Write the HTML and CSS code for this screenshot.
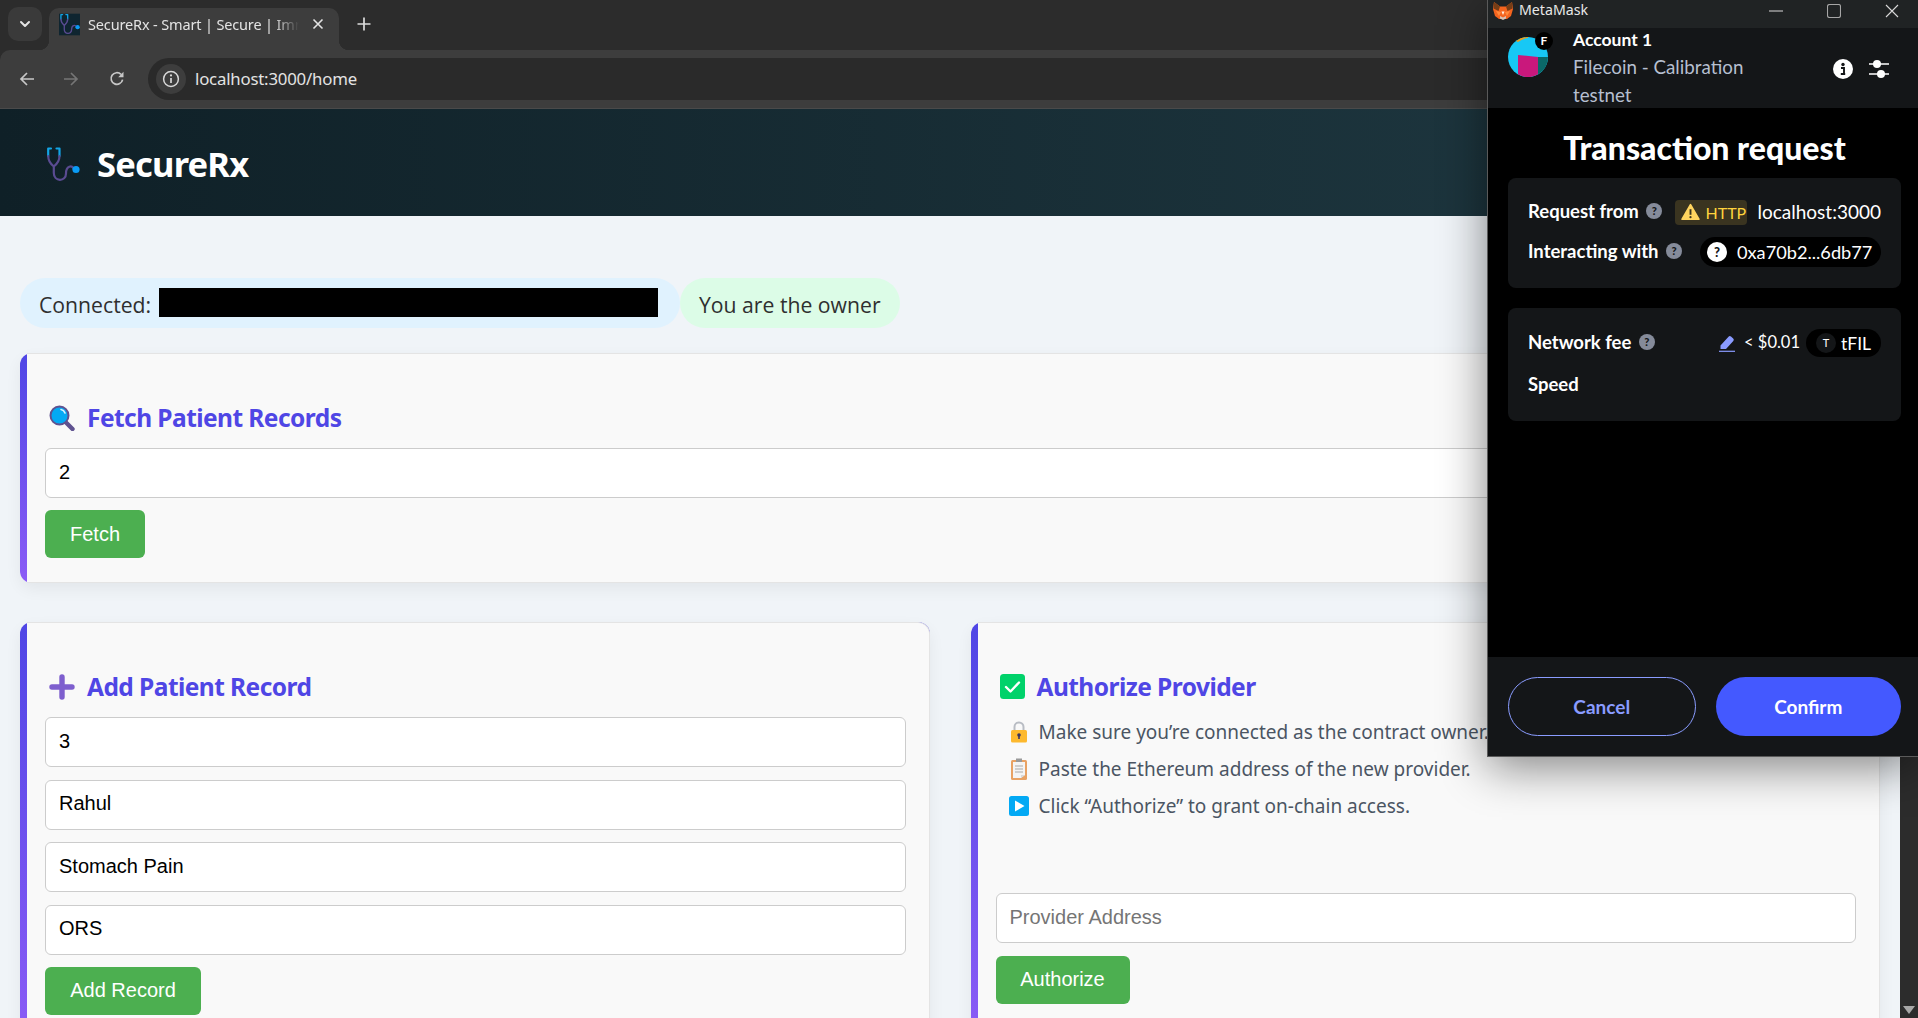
FILE: index.html
```html
<!DOCTYPE html>
<html lang="en">
<head>
<meta charset="utf-8">
<title>SecureRx - Smart | Secure | Immutable</title>
<link rel="stylesheet" href="styles.css">
</head>
<body>
<svg class="defs" width="0" height="0" aria-hidden="true">
  <defs>
    <g id="steth" fill="none" stroke-linecap="round" stroke-linejoin="round">
      <path d="M6 1.500H3.200V9M11.500 1.500H14.500V9" stroke="#12a5e6" stroke-width="2.200"/>
      <path d="M3.200 9C3.200 15 8.800 19.500 8.800 19.500S14.500 15 14.500 9M8.800 19.500V26C8.800 35 21 35 21 26.500C21 18.500 27 18 29 22" stroke="#5a4b92" stroke-width="2.200"/>
      <circle cx="31" cy="22.500" r="3.600" fill="#0a9bf5"/>
    </g>
  </defs>
</svg>

<div class="chrome">
  <div class="tabstrip">
    <button class="tab-search"><svg width="14" height="14" viewBox="0 0 14 14"><path d="M3 5l4 4 4-4" fill="none" stroke="#e3e3e3" stroke-width="2" stroke-linecap="round" stroke-linejoin="round"/></svg></button>
    <div class="tab">
      <svg class="favicon" width="21" height="25" viewBox="0 0 35 36"><rect width="35" height="36" fill="#0f2530"/><use href="#steth"/></svg>
      <span class="tab-title">SecureRx - Smart | Secure | Immutable</span>
      <svg class="tab-close" width="12" height="12" viewBox="0 0 12 12"><path d="M1.500 1.500l9 9M10.500 1.500l-9 9" stroke="#e3e3e3" stroke-width="1.600"/></svg>
    </div>
    <svg class="new-tab" width="14" height="14" viewBox="0 0 14 14"><path d="M7 0.500v13M0.500 7h13" stroke="#dcdcdc" stroke-width="1.700"/></svg>
  </div>
  <div class="toolbar">
    <svg class="nav-icon" width="16" height="16" viewBox="0 0 16 16"><path d="M15 8H2M8 2L2 8l6 6" fill="none" stroke="#c7c7c7" stroke-width="1.700"/></svg>
    <svg class="nav-icon" width="16" height="16" viewBox="0 0 16 16"><path d="M1 8h13M8 2l6 6-6 6" fill="none" stroke="#757575" stroke-width="1.700"/></svg>
    <svg class="nav-icon" width="16" height="16" viewBox="0 0 16 16"><path d="M13.600 8.600A5.800 5.800 0 1 1 12 3.400" fill="none" stroke="#c7c7c7" stroke-width="1.700"/><path d="M14.500 0.800V6.200H9.200z" fill="#c7c7c7"/></svg>
    <div class="omnibox">
      <span class="info-chip"><svg width="18" height="18" viewBox="0 0 18 18"><circle cx="9" cy="9" r="7.400" fill="none" stroke="#d8d8d8" stroke-width="1.500"/><path d="M9 8v5" stroke="#d8d8d8" stroke-width="1.700"/><circle cx="9" cy="5.400" r="1.100" fill="#d8d8d8"/></svg></span>
      <span class="url">localhost:3000/home</span>
    </div>
  </div>
</div>

<div class="viewport">
  <div class="page">
    <header class="app-header">
      <svg class="logo" width="35" height="36" viewBox="0 0 35 36"><use href="#steth"/></svg>
      <span class="brand">SecureRx</span>
    </header>
    <main class="content">
      <div class="status-row">
        <div class="pill pill-blue"><span class="pill-text">Connected: </span><span class="redacted"></span></div>
        <div class="pill pill-green"><span class="pill-text">You are the owner</span></div>
      </div>

      <section class="card card-fetch">
        <div class="card-body">
          <h2 class="card-title">
            <svg class="title-icon" width="26" height="26" viewBox="0 0 26 26"><path d="M16.500 17l7 7" stroke="#5f5290" stroke-width="4.400" stroke-linecap="round"/><circle cx="10.500" cy="10.500" r="9" fill="#03a9f4" stroke="#5f5290" stroke-width="2"/><path d="M12 4.500a5.500 5.500 0 0 1 4 3.500" stroke="#d5f1ff" stroke-width="1.600" fill="none" stroke-linecap="round"/></svg>
            Fetch Patient Records
          </h2>
          <input class="field" type="text" value="2">
          <button class="btn btn-fetch">Fetch</button>
        </div>
      </section>

      <div class="two-col">
        <section class="card">
          <div class="card-body">
            <h2 class="card-title">
              <svg class="title-icon" width="26" height="26" viewBox="0 0 26 26"><path d="M13 3v20M3 13h20" stroke="#7e5fce" stroke-width="5.400" stroke-linecap="round"/></svg>
              Add Patient Record
            </h2>
            <input class="field" type="text" value="3">
            <input class="field" type="text" value="Rahul">
            <input class="field" type="text" value="Stomach Pain">
            <input class="field" type="text" value="ORS">
            <button class="btn btn-add">Add Record</button>
          </div>
        </section>
        <section class="card">
          <div class="card-body">
            <h2 class="card-title">
              <svg class="title-icon" width="25" height="25" viewBox="0 0 25 25"><rect width="25" height="25" rx="3.500" fill="#00d26a"/><path d="M6 13l4.500 4.500L19 8.500" fill="none" stroke="#fff" stroke-width="2.400" stroke-linecap="round" stroke-linejoin="round"/></svg>
              Authorize Provider
            </h2>
            <ul class="steps">
              <li><svg class="step-icon" width="20" height="22" viewBox="0 0 20 22"><path d="M5.500 10V6a4.500 4.500 0 0 1 9 0v4" fill="none" stroke="#b9bdc4" stroke-width="2"/><rect x="2" y="9" width="16" height="12.500" rx="1.500" fill="#fdb92e"/><circle cx="10" cy="14" r="1.800" fill="#3a3560"/><path d="M10 14v4" stroke="#3a3560" stroke-width="1.600"/></svg>Make sure you’re connected as the contract owner.</li>
              <li><svg class="step-icon" width="20" height="22" viewBox="0 0 20 22"><rect x="2" y="2" width="16" height="20" rx="1.500" fill="#e8a264"/><path d="M4 4h12v13l-4 3H4z" fill="#f4f4f4"/><path d="M12 20l4-3h-4z" fill="#d9d9d9"/><rect x="7" y="0.500" width="6" height="3.500" fill="#9a9a9a"/><path d="M6 8h8M6 11h8M6 14h8" stroke="#a8a8a8" stroke-width="1.100"/></svg>Paste the Ethereum address of the new provider.</li>
              <li><svg class="step-icon" width="20" height="22" viewBox="0 0 20 22"><rect y="1" width="20" height="20" rx="2.500" fill="#03a9f4"/><path d="M6 5.500l9.500 5.500-9.500 5.500z" fill="#fff"/></svg>Click “Authorize” to grant on-chain access.</li>
            </ul>
            <input class="field" type="text" placeholder="Provider Address">
            <button class="btn btn-auth">Authorize</button>
          </div>
        </section>
      </div>
    </main>
  </div>
  <div class="scrollbar">
    <svg width="14" height="10" viewBox="0 0 14 10"><path d="M1 1h12L7 9z" fill="#a8a8a8"/></svg>
  </div>
</div>

<aside class="mm-window">
  <div class="mm-titlebar">
    <svg class="mm-fox" width="20" height="18" viewBox="0 0 20 18">
      <path d="M1 0l6 4.500h6L19 0l1 7-2 7-4 3H6l-4-3-2-7z" fill="#f4641e"/>
      <path d="M1 0l6 4.500L5.500 9 .5 6.500zM19 0l-6 4.500L14.500 9l5-2.500z" fill="#763d16"/>
      <path d="M3 9l5 1-2 4zM17 9l-5 1 2 4z" fill="#ff8a3c"/>
      <path d="M7 14l3 1.500 3-1.500v2.500l-3 1.500-3-1.500z" fill="#d7c1b3"/>
      <path d="M8.500 9.500h3L10 13z" fill="#fff0e0"/>
    </svg>
    <span class="mm-name">MetaMask</span>
    <div class="win-controls">
      <svg width="14" height="14" viewBox="0 0 14 14"><path d="M0 7h14" stroke="#d9d9d9"/></svg>
      <svg width="14" height="14" viewBox="0 0 14 14"><rect x="0.500" y="0.500" width="13" height="13" rx="2" fill="none" stroke="#a6a6a6" stroke-width="1.100"/></svg>
      <svg width="14" height="14" viewBox="0 0 14 14"><path d="M1 1l12 12M13 1L1 13" stroke="#d9d9d9" stroke-width="1.100"/></svg>
    </div>
  </div>
  <div class="mm-account">
    <div class="mm-avatar">
      <svg width="40" height="40" viewBox="0 0 40 40">
        <circle cx="20" cy="20" r="20" fill="#17c8f5"/>
        <path d="M30 20h10a20 20 0 0 1-10 17.300z" fill="#0b6868"/>
        <path d="M10 18l20 2v17.300a20 20 0 0 1-20 0z" fill="#c9187c"/>
        <path d="M8 4a20 20 0 0 1 12-4v1a20 20 0 0 0-10 4z" fill="#f39c12"/>
      </svg>
      <span class="mm-badge">F</span>
    </div>
    <div class="mm-acct-text">
      <div class="mm-acct-name">Account 1</div>
      <div class="mm-acct-net">Filecoin - Calibration testnet</div>
    </div>
    <svg class="mm-info" width="20" height="20" viewBox="0 0 20 20"><circle cx="10" cy="10" r="10" fill="#fff"/><circle cx="10" cy="5.500" r="1.700" fill="#141618"/><path d="M8 9h3v6h1.200M7.800 15h4.400" stroke="#141618" stroke-width="1.900" fill="none"/></svg>
    <svg class="mm-sliders" width="22" height="20" viewBox="0 0 22 20"><path d="M1 5h20M1 15h20" stroke="#fff" stroke-width="1.400"/><circle cx="9" cy="5" r="4" fill="#fff"/><circle cx="13" cy="15" r="4" fill="#fff"/></svg>
  </div>
  <div class="mm-body">
    <h1 class="mm-title">Transaction request</h1>
    <div class="mm-section mm-sec-request">
      <div class="mm-row">
        <span class="mm-label">Request from <span class="q">?</span></span>
        <span class="mm-right">
          <span class="http"><svg width="19" height="18" viewBox="0 0 17 16"><path d="M8.500 1.500L16 14.500H1z" fill="#ffd45f" stroke="#ffd45f" stroke-width="1.500" stroke-linejoin="round"/><path d="M8.500 5.500v5" stroke="#3a3420" stroke-width="1.700"/><circle cx="8.500" cy="12.600" r="1" fill="#3a3420"/></svg>HTTP</span>
          <span class="mm-val">localhost:3000</span>
        </span>
      </div>
      <div class="mm-row">
        <span class="mm-label">Interacting with <span class="q">?</span></span>
        <span class="addr"><span class="addr-dot">?</span>0xa70b2...6db77</span>
      </div>
    </div>
    <div class="mm-section mm-sec-fee">
      <div class="mm-row mm-row-fee">
        <span class="mm-label">Network fee <span class="q">?</span></span>
        <span class="mm-right mm-fee">
          <svg width="16" height="17" viewBox="0 0 16 17"><path d="M1.500 10.500L9.500 1.800a1.800 1.800 0 0 1 2.500-.2l2.200 1.900a1.800 1.800 0 0 1 .1 2.500L7 14H1.500z" fill="#8a9bff"/><path d="M0 16.300h16" stroke="#8a9bff" stroke-width="1.200"/></svg>
          <span class="mm-val fee-val">&lt; $0.01</span>
          <span class="token"><span class="token-dot">T</span>tFIL</span>
        </span>
      </div>
      <div class="mm-row mm-row-fee">
        <span class="mm-label">Speed</span>
      </div>
    </div>
  </div>
  <div class="mm-footer">
    <button class="mm-btn mm-cancel">Cancel</button>
    <button class="mm-btn mm-confirm">Confirm</button>
  </div>
</aside>
</body>
</html>
```

FILE: styles.css
```css
* { box-sizing: border-box; }
html, body { margin: 0; height: 100%; }
body {
  width: 1918px;
  height: 1018px;
  overflow: hidden;
  display: flex;
  flex-direction: column;
  background: #f0f4f8;
  font-family: "Open Sans", "Noto Sans", sans-serif;
  position: relative;
}
.defs { position: absolute; }

/* Browser chrome */
.chrome { flex: none; height: 109px; background: #2c2c2c; }
.tabstrip { height: 50px; display: flex; align-items: flex-end; padding-left: 8px; }
.tab-search {
  width: 34px; height: 34px; margin-bottom: 9px; border: 0; border-radius: 10px;
  background: #3a3a3a; display: flex; align-items: center; justify-content: center; padding: 0;
}
.tab {
  position: relative; width: 290px; height: 42px; margin-left: 7px;
  background: #3d3d3d; border-radius: 10px 10px 0 0;
  display: flex; align-items: center; padding: 0 0 10px 10px;
}
.tab::before, .tab::after {
  content: ""; position: absolute; bottom: 0; width: 10px; height: 10px;
}
.tab::before { left: -10px; background: radial-gradient(circle at 0 0, transparent 10px, #3d3d3d 10.5px); }
.tab::after { right: -10px; background: radial-gradient(circle at 100% 0, transparent 10px, #3d3d3d 10.5px); }
.favicon { flex: none; }
.tab-title {
  width: 211px; margin-left: 8px; white-space: nowrap; overflow: hidden;
  color: #e3e3e3; font-size: 14.5px; font-family: "Noto Sans", sans-serif; letter-spacing: -0.15px;
  -webkit-mask-image: linear-gradient(90deg, #000 88%, transparent 100%);
  mask-image: linear-gradient(90deg, #000 88%, transparent 100%);
}
.tab-close { margin-left: 13px; flex: none; }
.new-tab { margin: 0 0 19px 18px; }
.toolbar {
  height: 59px; background: #3d3d3d; border-top-left-radius: 10px;
  border-bottom: 1px solid #4a4a4a;
  display: flex; align-items: center; padding: 0 0 1px 19px;
}
.nav-icon { margin-right: 28px; flex: none; }
.nav-icon:nth-of-type(2) { margin-right: 30px; }
.nav-icon:nth-of-type(3) { margin-right: 23px; }
.omnibox {
  flex: 1; height: 42px; background: #2a2a2a; border-radius: 21px 0 0 21px;
  display: flex; align-items: center; padding-left: 8px;
}
.info-chip {
  width: 30px; height: 30px; border-radius: 50%; background: #3d3d3d;
  display: flex; align-items: center; justify-content: center;
}
.url { margin: 0 0 0 9px; color: #e3e3e3; font-size: 16.8px; font-family: "Noto Sans", sans-serif; letter-spacing: -0.2px; }

/* Page */
.viewport { flex: 1; min-height: 0; display: flex; overflow: hidden; }
.page { flex: 1; min-width: 0; overflow: hidden; }
.scrollbar {
  flex: none; width: 18px; background: #2c2c2c;
  display: flex; align-items: flex-end; justify-content: center; padding-bottom: 3px;
}
.app-header {
  height: 107px;
  background: linear-gradient(90deg, #0f2027, #203a43);
  display: flex; align-items: center; padding-left: 45px;
}
.logo { flex: none; margin-top: 5px; }
.brand { margin: 2px 0 0 17px; color: #fff; font-size: 34.5px; font-weight: 700; font-family: "Noto Sans", sans-serif; letter-spacing: -0.8px; }

.content { padding: 62px 20px 0; }
.status-row { display: flex; height: 50px; margin-bottom: 25px; }
.pill {
  display: flex; align-items: center; border-radius: 25px; height: 50px;
  padding: 0 19px; font-size: 21.2px; font-weight: 500; color: #2f2f2f; white-space: pre;
}
.pill-text { padding-top: 2px; }
.pill-blue { background: #e0f2fe; width: 660px; }
.pill-green { background: #dcfce7; width: 220px; }
.redacted { display: inline-block; width: 499px; height: 29px; background: #000; margin: -2px 0 0 2px; }

.card {
  border-radius: 12px;
  background: linear-gradient(180deg, #4f46e5, #8b5cf6);
  padding-left: 7px;
  box-shadow: 0 6px 16px rgba(0, 0, 0, 0.06);
}
.card-fetch { margin-bottom: 39px; }
.card-body {
  background: #f9f9f9;
  border: 1px solid #e4e4e4; border-left: 0;
  border-radius: 0 12px 12px 0;
  padding: 0 23px 24px 18px;
  height: 100%;
}
.card-title {
  margin: 0; height: 94px; padding-top: 33px;
  display: flex; align-items: center; gap: 12px;
  color: #4f46e5; font-size: 24.5px; font-weight: 700;
  font-family: "Noto Sans", sans-serif; letter-spacing: -0.55px; line-height: 32px;
}
.title-icon { flex: none; margin-left: 4px; }
.field {
  display: block; width: 100%; height: 50px; padding: 0 13px 2px;
  background: #fff; border: 1px solid #ccc; border-radius: 6px;
  font-family: "Liberation Sans", Arial, sans-serif; font-size: 20px; color: #000;
  margin-bottom: 12.4px;
}
.field::placeholder { color: #757575; }
.btn {
  display: block; height: 48px; border: 0; border-radius: 6px;
  background: #4caf50; color: #fff; padding: 0;
  font-family: "Liberation Sans", Arial, sans-serif; font-size: 20px;
}
.btn-fetch { width: 100px; }
.btn-add { width: 156px; }
.btn-auth { width: 134px; }
.two-col { display: grid; grid-template-columns: 1fr 1fr; gap: 41px; }
.steps { list-style: none; margin: -5px 0 0; padding: 1px 0 0; height: 181px; color: #4b5563; font-size: 19px; font-family: "Noto Sans", sans-serif; }
.steps li { height: 37px; display: flex; align-items: center; white-space: nowrap; padding-left: 13px; }
.step-icon { flex: none; margin-right: 10px; }

/* MetaMask window */
.mm-window {
  position: absolute; left: 1487px; top: 0; width: 431px; height: 757px;
  display: flex; flex-direction: column;
  background: #000;
  border-left: 1px solid #5a5a5a; border-bottom: 1px solid #5a5a5a;
  box-shadow: 0 10px 44px rgba(0, 0, 0, 0.48);
  font-family: "Lato", "Open Sans", sans-serif;
  color: #fff;
}
.mm-titlebar { flex: none; height: 28px; background: #202324; display: flex; align-items: center; padding-left: 5px; }
.mm-fox { flex: none; margin-top: -6px; }
.mm-name { margin: -9px 0 0 6px; font-family: "Noto Sans", sans-serif; font-size: 14.2px; color: #e8e8e8; }
.win-controls { margin-left: auto; display: flex; gap: 44px; padding-right: 19px; margin-top: -7px; }
.mm-account { flex: none; height: 80px; background: #141618; display: flex; padding-left: 20px; }
.mm-avatar { position: relative; width: 40px; height: 40px; margin-top: 9px; flex: none; }
.mm-avatar svg { display: block; }
.mm-badge {
  position: absolute; right: -5px; top: -5px; width: 18px; height: 18px; border-radius: 50%;
  background: #000; color: #fff; font-size: 12px; font-weight: 700; text-align: center; line-height: 18px;
}
.mm-acct-text { margin: -1px 0 0 25px; width: 190px; flex: none; }
.mm-acct-name { font-size: 17.5px; font-weight: 700; line-height: 26px; height: 26px; }
.mm-acct-net { font-size: 18.8px; line-height: 28px; color: #b6bfd0; }
.mm-info { margin: 31px 0 0 70px; flex: none; }
.mm-sliders { margin: 31px 0 0 15px; flex: none; }
.mm-body { flex: 1; padding: 0 17px 0 20px; }
.mm-title { margin: 0; height: 70px; padding-top: 22px; text-align: center; font-size: 32px; line-height: 36px; font-weight: 900; color: #fff; }
.mm-section { background: #141618; border-radius: 8px; padding: 0 20px; display: flex; flex-direction: column; }
.mm-sec-request { height: 110px; padding-top: 19px; gap: 10px; margin-bottom: 20px; }
.mm-sec-fee { height: 113px; padding-top: 21px; gap: 14px; }
.mm-row { height: 30px; display: flex; align-items: center; justify-content: space-between; }
.mm-row-fee { height: 28px; }
.mm-label { font-size: 18.5px; font-weight: 700; display: flex; align-items: center; gap: 5px; white-space: pre; padding-bottom: 2px; }
.mm-label .q {
  width: 16px; height: 16px; border-radius: 50%; background: #858b9a; color: #141618;
  font-size: 11px; font-weight: 900; text-align: center; line-height: 16px; margin-left: -2px;
}
.mm-right { display: flex; align-items: center; }
.http {
  display: flex; align-items: center; gap: 5px; width: 72px; height: 25px; padding-left: 6px;
  background: #3a3420; border-radius: 4px; color: #ffd33d; font-size: 16px; margin-right: 10px;
}
.mm-val { font-size: 19px; color: #fff; padding-bottom: 2px; }
.addr {
  display: flex; align-items: center; width: 181px; height: 30px; padding-left: 7px;
  background: #000; border-radius: 15px; font-size: 18.2px;
}
.addr-dot {
  width: 20px; height: 20px; border-radius: 50%; background: #fff; color: #141618;
  font-size: 13px; font-weight: 900; text-align: center; line-height: 20px; margin-right: 10px;
}
.mm-val.fee-val { margin: 0 6px 0 9px; font-size: 16.5px; }
.token {
  display: flex; align-items: center; width: 75px; height: 28px; padding-left: 10px;
  background: #000; border-radius: 14px; font-size: 17.5px;
}
.token-dot {
  width: 20px; height: 20px; border-radius: 50%; background: #141618; color: #fff;
  font-size: 11px; text-align: center; line-height: 20px; margin-right: 5px;
}
.mm-footer { flex: none; height: 99px; background: #141618; display: flex; gap: 20px; padding: 20px 17px 0 20px; }
.mm-btn {
  flex: 1; height: 59px; border-radius: 30px; padding: 0;
  font-family: "Lato", "Open Sans", sans-serif; font-size: 19px; font-weight: 700;
}
.mm-cancel { background: transparent; border: 1px solid #8a9cff; color: #8a9cff; }
.mm-confirm { background: #4459ff; border: 0; color: #fff; }
```
